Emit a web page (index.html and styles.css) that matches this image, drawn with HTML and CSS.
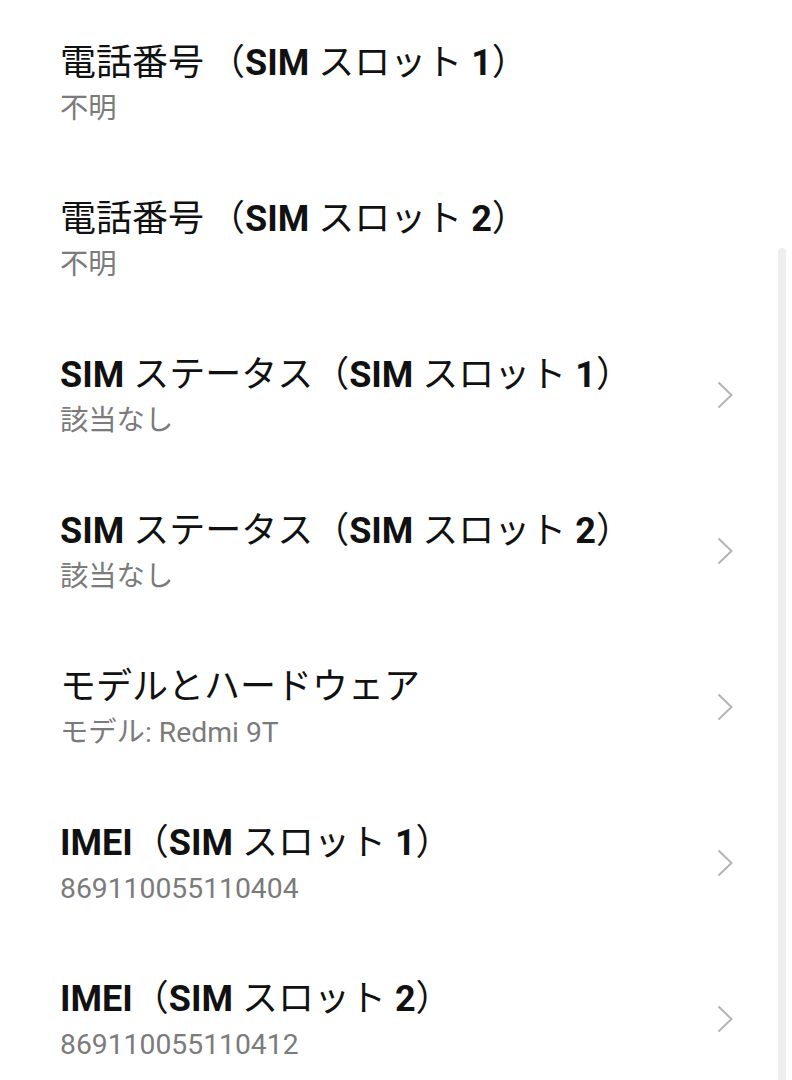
FILE: index.html
```html
<!DOCTYPE html>
<html lang="ja">
<head>
    <meta charset="UTF-8">
    <meta name="viewport" content="width=device-width, initial-scale=1.0">
    <title>デバイス情報</title>
    <link rel="stylesheet" href="styles.css">
</head>
<body>
    <div class="list">
        <div class="item">
            <div class="text">
                <div class="title">電話番号<span class="open">（</span><b>SIM</b> スロット <b>1</b>）</div>
                <div class="summary">不明</div>
            </div>
        </div>
        <div class="item">
            <div class="text">
                <div class="title">電話番号<span class="open">（</span><b>SIM</b> スロット <b>2</b>）</div>
                <div class="summary">不明</div>
            </div>
        </div>
        <div class="item">
            <div class="text">
                <div class="title"><b>SIM</b> ステータス（<b>SIM</b> スロット <b>1</b>）</div>
                <div class="summary">該当なし</div>
            </div>
            <svg class="arrow" width="16" height="28" viewBox="0 0 16 28"><path d="M1.5 1.5 L14.5 14 L1.5 26.5" fill="none" stroke="#b4b4b4" stroke-width="2"/></svg>
        </div>
        <div class="item">
            <div class="text">
                <div class="title"><b>SIM</b> ステータス（<b>SIM</b> スロット <b>2</b>）</div>
                <div class="summary">該当なし</div>
            </div>
            <svg class="arrow" width="16" height="28" viewBox="0 0 16 28"><path d="M1.5 1.5 L14.5 14 L1.5 26.5" fill="none" stroke="#b4b4b4" stroke-width="2"/></svg>
        </div>
        <div class="item">
            <div class="text">
                <div class="title">モデルとハードウェア</div>
                <div class="summary">モデル: Redmi 9T</div>
            </div>
            <svg class="arrow" width="16" height="28" viewBox="0 0 16 28"><path d="M1.5 1.5 L14.5 14 L1.5 26.5" fill="none" stroke="#b4b4b4" stroke-width="2"/></svg>
        </div>
        <div class="item">
            <div class="text">
                <div class="title"><b>IMEI</b>（<b>SIM</b> スロット <b>1</b>）</div>
                <div class="summary">869110055110404</div>
            </div>
            <svg class="arrow" width="16" height="28" viewBox="0 0 16 28"><path d="M1.5 1.5 L14.5 14 L1.5 26.5" fill="none" stroke="#b4b4b4" stroke-width="2"/></svg>
        </div>
        <div class="item">
            <div class="text">
                <div class="title"><b>IMEI</b>（<b>SIM</b> スロット <b>2</b>）</div>
                <div class="summary">869110055110412</div>
            </div>
            <svg class="arrow" width="16" height="28" viewBox="0 0 16 28"><path d="M1.5 1.5 L14.5 14 L1.5 26.5" fill="none" stroke="#b4b4b4" stroke-width="2"/></svg>
        </div>
    </div>
    <div class="scrollbar"></div>
</body>
</html>
```
FILE: styles.css
```css
body {
    margin: 0;
    background: #ffffff;
    font-family: Roboto, "Noto Sans CJK JP", sans-serif;
    overflow: hidden;
}
.list {
    padding-top: 5px;
}
.item {
    display: flex;
    align-items: center;
    height: 156px;
    padding: 6px 59px 0 60px;
    box-sizing: border-box;
}
.text {
    flex: 1;
}
.title {
    font-size: 36px;
    line-height: 44px;
    color: #111111;
    white-space: nowrap;
}
.title b {
    font-weight: 700;
}
.title .open {
    margin-left: 5px;
}
.summary {
    font-size: 28.3px;
    line-height: 44px;
    margin-top: 2px;
    color: #7b7b7b;
}
.arrow {
    flex: none;
    display: block;
    margin-bottom: 6px;
}
.scrollbar {
    position: absolute;
    top: 248px;
    right: 6px;
    width: 8px;
    bottom: 0;
    background: #efefef;
    border-radius: 4px 4px 0 0;
}
```
